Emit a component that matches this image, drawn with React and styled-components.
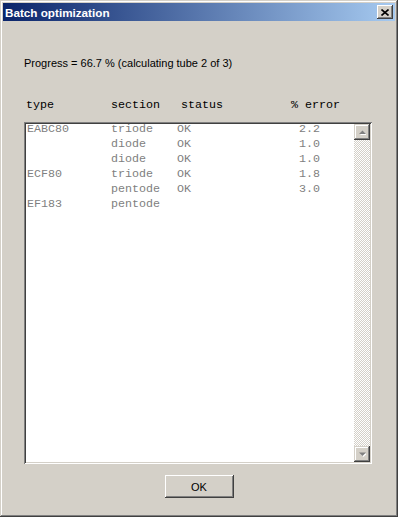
import styled, { createGlobalStyle } from "styled-components";

const GlobalStyle = createGlobalStyle`
  html, body {
    margin: 0;
    padding: 0;
    background: #d4d0c8;
  }
  * {
    box-sizing: border-box;
  }
`;

const rows = [
  { type: "EABC80", section: "triode", status: "OK", error: "2.2" },
  { type: "", section: "diode", status: "OK", error: "1.0" },
  { type: "", section: "diode", status: "OK", error: "1.0" },
  { type: "ECF80", section: "triode", status: "OK", error: "1.8" },
  { type: "", section: "pentode", status: "OK", error: "3.0" },
  { type: "EF183", section: "pentode", status: "", error: "" },
];

const Window = styled.div`
  width: 398px;
  height: 517px;
  padding: 3px;
  display: flex;
  flex-direction: column;
  background: #d4d0c8;
  box-shadow: inset -1px -1px #404040, inset 1px 1px #d4d0c8,
    inset -2px -2px #808080, inset 2px 2px #ffffff;
`;

const TitleBar = styled.div`
  height: 18px;
  display: flex;
  align-items: center;
  justify-content: space-between;
  padding: 0 2px 0 2px;
  background: linear-gradient(to right, #0a246a, #a6caf0);
`;

const Title = styled.span`
  font-family: "Liberation Sans", Arial, sans-serif;
  font-weight: bold;
  font-size: 11.7px;
  color: #ffffff;
  line-height: 13px;
`;

const CloseButton = styled.div`
  width: 16px;
  height: 14px;
  display: flex;
  align-items: center;
  justify-content: center;
  background: #d4d0c8;
  box-shadow: inset -1px -1px #404040, inset 1px 1px #ffffff,
    inset -2px -2px #808080;
`;

const Body = styled.div`
  flex: 1;
  display: flex;
  flex-direction: column;
  padding: 0 0 0 21px;
`;

const Progress = styled.div`
  margin-top: 36px;
  font-family: "Liberation Sans", Arial, sans-serif;
  font-size: 11px;
  line-height: 13px;
  color: #000000;
`;

const Mono = styled.div`
  font-family: "Liberation Mono", "Courier New", monospace;
  font-size: 11.67px;
`;

const Header = styled(Mono)`
  margin-top: 28px;
  display: grid;
  grid-template-columns: 85px 70px 110px auto;
  padding-left: 2px;
  line-height: 14px;
  color: #000000;
`;

const ListBox = styled.div`
  margin-top: 10px;
  width: 348px;
  height: 342px;
  padding: 2px;
  display: flex;
  background: #ffffff;
  box-shadow: inset 1px 1px #808080, inset -1px -1px #ffffff,
    inset 2px 2px #404040, inset -2px -2px #d4d0c8;
`;

const RowList = styled.div`
  flex: 1;
  padding-left: 1px;
`;

const Row = styled(Mono)`
  height: 15px;
  line-height: 10px;
  display: grid;
  grid-template-columns: 84px 66px 40px 103px;
  color: #808080;
`;

const ErrorCell = styled.span`
  text-align: right;
`;

const ScrollBar = styled.div`
  width: 16px;
  display: flex;
  flex-direction: column;
  background-color: #ffffff;
  background-image: repeating-conic-gradient(#d4d0c8 0 25%, #ffffff 0 50%);
  background-size: 2px 2px;
`;

const Track = styled.div`
  flex: 1;
`;

const ScrollButton = styled.div`
  width: 16px;
  height: 16px;
  display: flex;
  align-items: center;
  justify-content: center;
  background: #d4d0c8;
  box-shadow: inset -1px -1px #404040, inset 1px 1px #d4d0c8,
    inset -2px -2px #808080, inset 2px 2px #ffffff;
`;

const Footer = styled.div`
  margin-top: 11px;
  display: flex;
  justify-content: center;
  padding-right: 21px;
`;

const OkButton = styled.div`
  width: 69px;
  height: 23px;
  display: flex;
  align-items: center;
  justify-content: center;
  font-family: "Liberation Sans", Arial, sans-serif;
  font-size: 11px;
  color: #000000;
  background: #d4d0c8;
  box-shadow: inset -1px -1px #404040, inset 1px 1px #ffffff,
    inset -2px -2px #808080, inset 2px 2px #d4d0c8;
`;

function Arrow({ up }) {
  return (
    <svg width="7" height="5" viewBox="0 0 7 5">
      {up ? (
        <>
          <path d="M1 5h7L4.5 1.5z" fill="#ffffff" />
          <path d="M0 4h7L3.5 0.5z" fill="#808080" />
        </>
      ) : (
        <>
          <path d="M1 1.5h7L4.5 5z" fill="#ffffff" />
          <path d="M0 0.5h7L3.5 4z" fill="#808080" />
        </>
      )}
    </svg>
  );
}

export default function App() {
  return (
    <>
      <GlobalStyle />
      <Window>
        <TitleBar>
          <Title>Batch optimization</Title>
          <CloseButton>
            <svg width="8" height="7" viewBox="0 0 8 7">
              <path d="M0.5 0.5L7.5 6.5M7.5 0.5L0.5 6.5" stroke="#000" strokeWidth="1.6" />
            </svg>
          </CloseButton>
        </TitleBar>
        <Body>
          <Progress>Progress = 66.7 % (calculating tube 2 of 3)</Progress>
          <Header>
            <span>type</span>
            <span>section</span>
            <span>status</span>
            <span>% error</span>
          </Header>
          <ListBox>
            <RowList>
              {rows.map((r, i) => (
                <Row key={i}>
                  <span>{r.type}</span>
                  <span>{r.section}</span>
                  <span>{r.status}</span>
                  <ErrorCell>{r.error}</ErrorCell>
                </Row>
              ))}
            </RowList>
            <ScrollBar>
              <ScrollButton>
                <Arrow up />
              </ScrollButton>
              <Track />
              <ScrollButton>
                <Arrow />
              </ScrollButton>
            </ScrollBar>
          </ListBox>
          <Footer>
            <OkButton>OK</OkButton>
          </Footer>
        </Body>
      </Window>
    </>
  );
}
